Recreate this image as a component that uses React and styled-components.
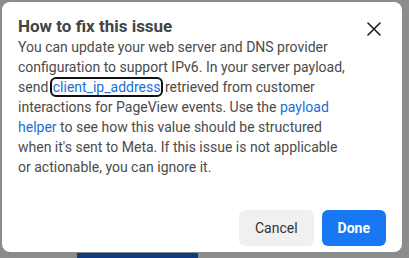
import React from 'react'
import styled, { createGlobalStyle } from 'styled-components'

const Global = createGlobalStyle`
  html, body {
    margin: 0;
    background: #8c8c8c;
    font-family: Roboto, "Liberation Sans", Arial, sans-serif;
  }
  #root {
    padding: 2px 7px 0 2px;
  }
`

function App() {
  return (
    <>
      <Global />
      <Dialog>
        <Header>
          <Title>How to fix this issue</Title>
          <Close aria-label="Close">
            <svg width="14" height="14" viewBox="0 0 14 14">
              <path d="M1 1 L13 13 M13 1 L1 13" stroke="#1c1e21" strokeWidth="1.6" strokeLinecap="round" />
            </svg>
          </Close>
        </Header>
        <Body>
          You can update your web server and DNS provider configuration to support IPv6. In your server payload,
          send <Link focused>client_ip_address</Link> retrieved from customer interactions for PageView events. Use
          the <Link>payload helper</Link> to see how this value should be structured when it's sent to Meta. If this
          issue is not applicable or actionable, you can ignore it.
        </Body>
        <Footer>
          <Button>Cancel</Button>
          <Button primary>Done</Button>
        </Footer>
      </Dialog>
      <PageBar />
    </>
  )
}

export default App

const Dialog = styled.div`
  width: 400px;
  height: 250px;
  box-sizing: border-box;
  background: #fff;
  border-radius: 8px;
  padding: 14px 16px 6px 16px;
  display: flex;
  flex-direction: column;
`

const Header = styled.div`
  display: flex;
  align-items: flex-start;
  justify-content: space-between;
`

const Title = styled.h2`
  margin: 0;
  font-size: 17px;
  line-height: 21px;
  font-weight: 700;
  color: #444;
`

const Close = styled.button`
  border: none;
  background: none;
  padding: 0;
  margin: 5px 4px 0 0;
  width: 16px;
  height: 16px;
  display: flex;
  align-items: center;
  justify-content: center;
  cursor: pointer;
`

const Body = styled.p`
  margin: 0;
  max-width: 330px;
  font-size: 14px;
  line-height: 20px;
  color: #4b4b4b;
  flex: 1;
`

const Link = styled.a`
  color: #1a6ed8;
  cursor: pointer;
  border-radius: 4px;
  padding: ${p => (p.focused ? '0 1px' : '0')};
  outline: ${p => (p.focused ? '2px solid #111' : 'none')};
  outline-offset: 0;
`

const Footer = styled.div`
  display: flex;
  justify-content: flex-end;
  gap: 8px;
`

const Button = styled.button`
  height: 36px;
  padding: 0 16px;
  border: none;
  border-radius: 6px;
  font-family: inherit;
  font-size: 14px;
  font-weight: ${p => (p.primary ? 700 : 400)};
  background: ${p => (p.primary ? '#1877f2' : '#f0f0f0')};
  color: ${p => (p.primary ? '#fff' : '#333')};
  cursor: pointer;
`

const PageBar = styled.div`
  margin: 1px 0 0 75px;
  width: 121px;
  height: 6px;
  background: #0e3b82;
`
